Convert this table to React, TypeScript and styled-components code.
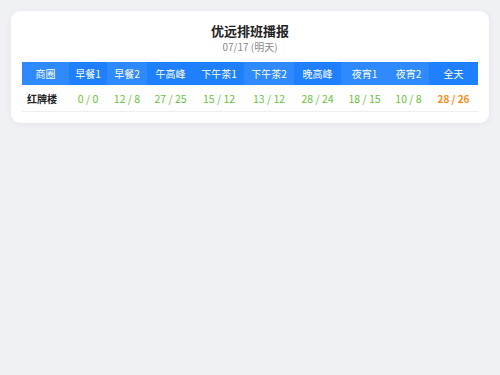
import React from "react";
import styled, { createGlobalStyle } from "styled-components";

const Global = createGlobalStyle`
  html, body { margin: 0; padding: 0; background: #f0f1f5; }
  body { font-family: "Noto Sans CJK SC", "Noto Sans", sans-serif; }
`;

const Page = styled.div`
  padding: 11px;
  min-height: 375px;
  box-sizing: border-box;
`;

const Card = styled.div`
  background: #ffffff;
  border-radius: 9px;
  box-shadow: 0 1px 6px rgba(0, 0, 0, 0.06);
  padding: 10px 11px 11px;
`;

const Header = styled.div`
  display: flex;
  flex-direction: column;
  align-items: center;
  margin-bottom: 9px;
`;

const Title = styled.div`
  font-size: 13px;
  font-weight: 700;
  color: #222;
  line-height: 20px;
`;

const Sub = styled.div`
  font-size: 10px;
  color: #8a8a8a;
  line-height: 12px;
`;

const COLS = "47px 38px 40px 47px 50px 50px 47px 47px 41px 49px";

const Grid = styled.div`
  display: grid;
  grid-template-columns: ${COLS};
`;

const HeadCell = styled.div<{ $alt: boolean }>`
  height: 23px;
  display: flex;
  align-items: center;
  justify-content: center;
  font-size: 10px;
  color: #fff;
  background: ${(p) => (p.$alt ? "#1f80ff" : "#2f8aff")};
  white-space: nowrap;
`;

const BodyCell = styled.div<{ $kind: "name" | "val" | "total" }>`
  height: 26px;
  display: flex;
  align-items: center;
  justify-content: ${(p) => (p.$kind === "name" ? "flex-start" : "center")};
  padding-left: ${(p) => (p.$kind === "name" ? "5px" : "0")};
  font-size: ${(p) => (p.$kind === "val" ? "10.5px" : "10px")};
  white-space: nowrap;
  border-bottom: 1px solid #eeeeee;
  color: ${(p) => (p.$kind === "name" ? "#222" : p.$kind === "total" ? "#fa8c16" : "#67c23a")};
  font-weight: ${(p) => (p.$kind === "val" ? 400 : 700)};
`;

const heads = ["商圈", "早餐1", "早餐2", "午高峰", "下午茶1", "下午茶2", "晚高峰", "夜宵1", "夜宵2", "全天"];
const alts = [false, true, false, true, true, false, true, false, false, true];
const vals = ["0 / 0", "12 / 8", "27 / 25", "15 / 12", "13 / 12", "28 / 24", "18 / 15", "10 / 8"];

export default function App() {
  return (
    <Page>
      <Global />
      <Card>
        <Header>
          <Title>优远排班播报</Title>
          <Sub>07/17 (明天)</Sub>
        </Header>
        <Grid>
          {heads.map((h, i) => (
            <HeadCell key={h} $alt={alts[i]}>
              {h}
            </HeadCell>
          ))}
          <BodyCell $kind="name">红牌楼</BodyCell>
          {vals.map((v, i) => (
            <BodyCell key={i} $kind="val">
              {v}
            </BodyCell>
          ))}
          <BodyCell $kind="total">28 / 26</BodyCell>
        </Grid>
      </Card>
    </Page>
  );
}
